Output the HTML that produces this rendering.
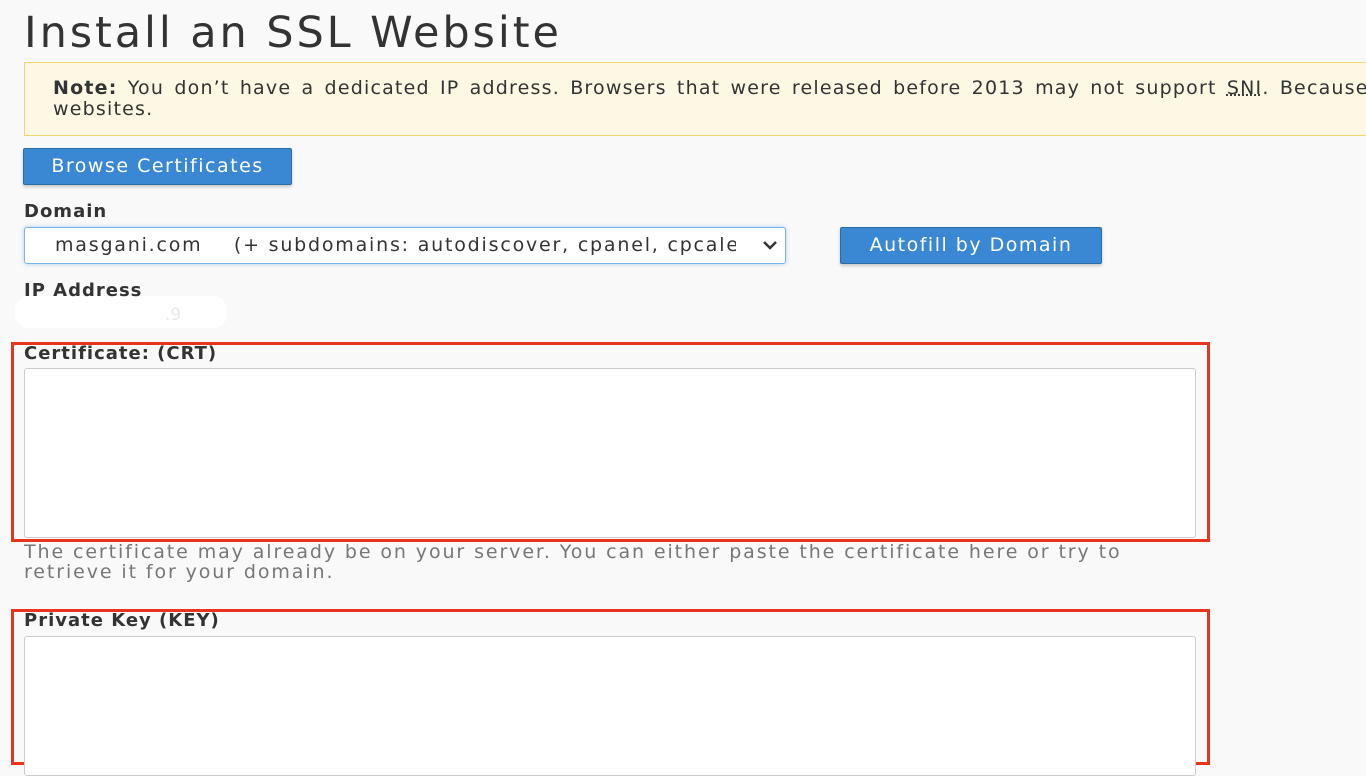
<!DOCTYPE html>
<html><head><style>
body{margin:0;width:1366px;height:768px;overflow:hidden;background:#f9f9f9;font-family:"DejaVu Sans","Liberation Sans",sans-serif;color:#333;position:relative}
.a{position:absolute}
h1{position:absolute;left:24px;top:8px;margin:0;font-weight:normal;font-size:43px;letter-spacing:2.9px;color:#333}
.note{left:24px;top:62px;width:1360px;height:74px;background:#fcf8e3;border:1px solid #f0d66d;box-sizing:border-box}
.note p{margin:0;position:absolute;left:28px;top:15px;font-size:19px;line-height:21px;letter-spacing:1.2px;word-spacing:3px;white-space:nowrap;color:#333}
.btn{background:#3a87d4;color:#fff;border:1px solid #2e6da4;border-radius:2px;font-size:19px;letter-spacing:1.5px;box-shadow:0 2px 3px rgba(0,0,0,.2);box-sizing:border-box;text-align:center}
.lbl{font-size:18px;font-weight:bold;color:#333;letter-spacing:1px;z-index:2}
.sel{left:24px;top:227px;width:762px;height:37px;background:#fff;border:1px solid #79b3e8;border-radius:3px;box-sizing:border-box;box-shadow:0 0 4px rgba(100,160,230,.5);font-size:19px;letter-spacing:1.8px;line-height:35px;padding-left:30px;white-space:nowrap;overflow:hidden}
.ta{background:#fff;border:1px solid #ccc;border-radius:3px;box-sizing:border-box}
.red{border:3px solid #e8341c;box-sizing:border-box}
.help{left:24px;top:542px;font-size:19px;line-height:20px;color:#777;letter-spacing:1.9px;white-space:nowrap}
</style></head><body>
<h1>Install an SSL Website</h1>
<div class="a note"><p><b>Note:</b> You don’t have a dedicated IP address. Browsers that were released before 2013 may not support <u style="text-decoration-style:dotted">SNI</u>. Because<br>websites.</p></div>
<div class="a btn" style="left:23px;top:148px;width:269px;height:37px;line-height:35px">Browse Certificates</div>
<div class="a lbl" style="left:24px;top:201px">Domain</div>
<div class="a sel">masgani.com&nbsp;&nbsp;&nbsp;&nbsp;(+ subdomains: autodiscover, cpanel, cpcalendars</div>
<div class="a" style="left:736px;top:228px;width:49px;height:35px;background:#fff;border-radius:0 3px 3px 0"></div>
<svg class="a" style="left:762px;top:240px" width="16" height="10"><path d="M2 2 L8 8 L14 2" stroke="#333" stroke-width="2.5" fill="none"/></svg>
<div class="a btn" style="left:840px;top:227px;width:262px;height:37px;line-height:35px">Autofill by Domain</div>
<div class="a" style="left:15px;top:296px;width:212px;height:32px;background:#fff;border-radius:14px"></div>
<div class="a lbl" style="left:24px;top:280px">IP Address</div>
<div class="a" style="left:165px;top:305px;font-size:17px;color:#e8e8e8">.9</div>
<div class="a red" style="left:11px;top:342px;width:1199px;height:200px"></div>
<div class="a lbl" style="left:24px;top:343px">Certificate: (CRT)</div>
<div class="a ta" style="left:24px;top:368px;width:1172px;height:170px"></div>
<div class="a help">The certificate may already be on your server. You can either paste the certificate here or try to<br>retrieve it for your domain.</div>
<div class="a red" style="left:11px;top:609px;width:1199px;height:156px"></div>
<div class="a lbl" style="left:24px;top:610px">Private Key (KEY)</div>
<div class="a ta" style="left:24px;top:636px;width:1172px;height:140px"></div>
</body></html>
